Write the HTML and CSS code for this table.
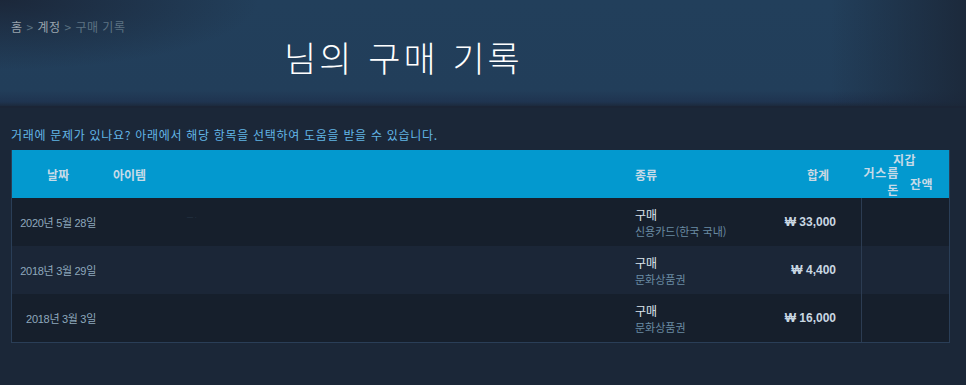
FILE: index.html
```html
<!DOCTYPE html>
<html lang="ko">
<head>
<meta charset="utf-8">
<link rel="stylesheet" href="styles.css">
</head>
<body>
<div class="hero">
  <div class="crumbs"><span class="crumb-link">홈</span> &gt; <span class="crumb-link">계정</span> &gt; <span class="crumb-cur">구매 기록</span></div>
  <h1 class="title">님의 구매 기록</h1>
</div>
<div class="content">
  <p class="help">거래에 문제가 있나요? 아래에서 해당 항목을 선택하여 도움을 받을 수 있습니다.</p>
  <div class="table">
    <div class="row head">
      <div class="c date">날짜</div>
      <div class="c item">아이템</div>
      <div class="c type">종류</div>
      <div class="c total">합계</div>
      <div class="c change">거스름<br>돈</div>
      <div class="c wallet"><span class="w1">지갑</span><span class="w2">잔액</span></div>
    </div>
    <div class="row odd">
      <div class="c date">2020년 5월 28일</div>
      <div class="c item"><span class="faint">— ·</span></div>
      <div class="c type"><div class="t1">구매</div><div class="t2">신용카드(한국 국내)</div></div>
      <div class="c total">₩ 33,000</div>
      <div class="c rest"></div>
    </div>
    <div class="row even">
      <div class="c date">2018년 3월 29일</div>
      <div class="c item"></div>
      <div class="c type"><div class="t1">구매</div><div class="t2">문화상품권</div></div>
      <div class="c total">₩ 4,400</div>
      <div class="c rest"></div>
    </div>
    <div class="row odd">
      <div class="c date">2018년 3월 3일</div>
      <div class="c item"></div>
      <div class="c type"><div class="t1">구매</div><div class="t2">문화상품권</div></div>
      <div class="c total">₩ 16,000</div>
      <div class="c rest"></div>
    </div>
  </div>
</div>
</body>
</html>
```
FILE: styles.css
```css
html, body {
  margin: 0;
  padding: 0;
}
body {
  background: #1b2738;
  font-family: "Liberation Sans", "Noto Sans CJK KR", sans-serif;
  width: 966px;
  height: 385px;
  overflow: hidden;
}
.hero {
  height: 108px;
  box-sizing: border-box;
  padding: 20px 0 0 11px;
  background:
    radial-gradient(ellipse 260px 70px at 0 0, rgba(27,38,56,0.95), rgba(27,38,56,0) 100%),
    linear-gradient(to right, rgba(27,39,56,0) 0, rgba(27,39,56,0) 86%, rgba(27,39,56,0.9) 100%),
    linear-gradient(to bottom, #223f5b 0, #223e5a 85%, #1f3450 96%, #1c2a3d 100%);
  border-bottom: 2px solid #1b2536;
}
.crumbs {
  font-size: 12px;
  line-height: 14px;
  letter-spacing: 0.5px;
  color: #5d7383;
  font-family: "Noto Sans CJK KR", sans-serif;
}
.crumb-link { color: #9aa4ad; }
.crumb-cur { color: #5d7383; }
.title {
  margin: -1px 0 0 273px;
  font-family: "Noto Sans CJK KR", sans-serif;
  font-weight: 300;
  font-size: 35px;
  letter-spacing: 3px;
  word-spacing: 1px;
  line-height: 48px;
  color: #ffffff;
}
.content {
  padding: 0 16px 0 11px;
}
.help {
  margin: 17px 0 0 0;
  font-family: "Noto Sans CJK KR", sans-serif;
  font-size: 12px;
  letter-spacing: 0.7px;
  line-height: 20px;
  color: #62b6e6;
}
.table {
  margin-top: 5px;
  width: 939px;
  border: 1px solid #2a3e57;
  border-top: 0;
  box-sizing: border-box;
}
.row {
  display: grid;
  grid-template-columns: 92px 521px 135px 101px 39px 49px;
  height: 48px;
}
.row .rest { grid-column: 5 / span 2; border-left: 1px solid #2c3c52; }
.head {
  background: #0399cf;
  color: #c7dbe8;
  font-family: "Noto Sans CJK KR", sans-serif;
  font-weight: 700;
  font-size: 12px;
  height: 48px;
}
.odd { background: #161f2c; }
.even { background: #1b2637; }
.c {
  display: flex;
  align-items: center;
  box-sizing: border-box;
}
.date {
  justify-content: flex-end;
  font-size: 11px;
  letter-spacing: -0.3px;
  color: #8ea8bc;
  padding-right: 8px;
  white-space: nowrap;
}
.head .date { justify-content: center; padding-right: 0; font-size: 12px; letter-spacing: 0; color: #c7dbe8; }
.item { padding-left: 9px; }
.faint {
  font-size: 6px;
  color: #2f4456;
  margin-left: 74px;
  margin-top: -10px;
}
.type {
  flex-direction: column;
  align-items: flex-start;
  justify-content: center;
  padding-left: 10px;
}
.head .type { flex-direction: row; align-items: center; justify-content: flex-start; }
.t1 {
  font-family: "Noto Sans CJK KR", sans-serif;
  font-size: 12px;
  line-height: 15px;
  color: #dde6ee;
  margin-top: 1px;
}
.t2 {
  font-family: "Noto Sans CJK KR", sans-serif;
  font-size: 11px;
  line-height: 14px;
  color: #6a8ba3;
  margin-top: 2px;
}
.total {
  justify-content: flex-end;
  padding-right: 25px;
  font-weight: 700;
  font-size: 12px;
  color: #c9d7e2;
}
.head .total { padding-right: 32px; }
.change {
  align-items: flex-start;
  justify-content: flex-end;
  text-align: right;
  line-height: 17px;
  padding-top: 14px;
  padding-right: 1px;
  letter-spacing: 0.8px;
  white-space: nowrap;
}
.wallet {
  position: relative;
}
.w1 {
  position: absolute;
  left: -7px;
  top: 1px;
  letter-spacing: 0.5px;
}
.w2 {
  position: absolute;
  left: 10px;
  top: 25px;
  letter-spacing: 0.5px;
}
```
